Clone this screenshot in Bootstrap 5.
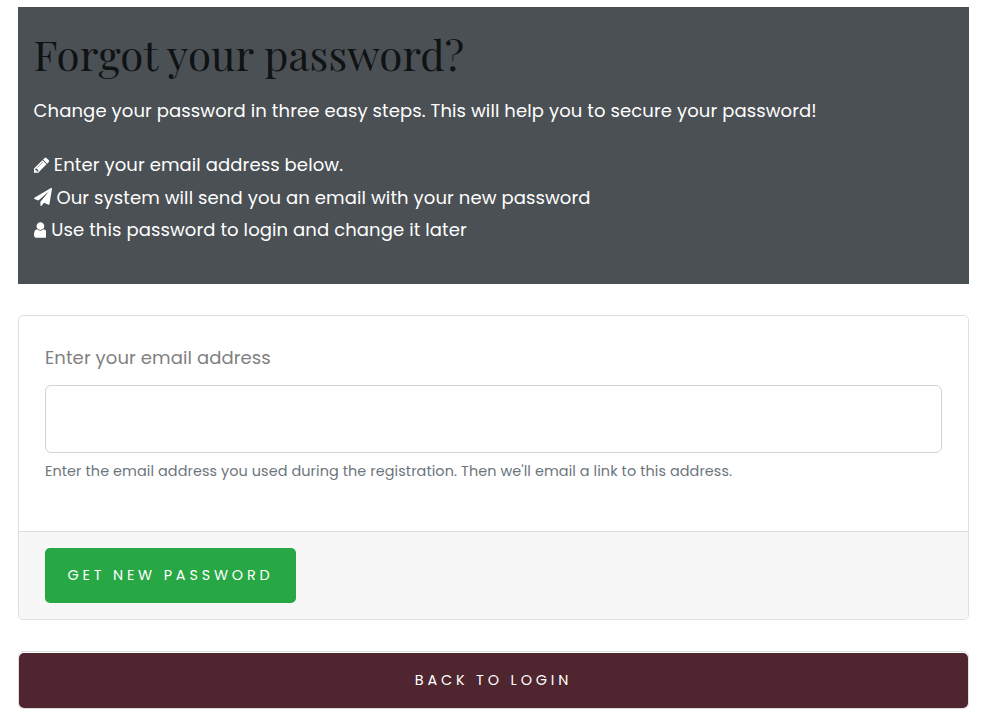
<!DOCTYPE html>
<html lang="en">
<head>
<meta charset="utf-8">
<meta name="viewport" content="width=device-width, initial-scale=1">
<title>Forgot your password?</title>
<link href="https://cdn.jsdelivr.net/npm/bootstrap@5.3.0/dist/css/bootstrap.min.css" rel="stylesheet">
<style>
body{font-family:Poppins,Inter,"Open Sans",sans-serif;font-size:18px;line-height:1.8;letter-spacing:.104px;color:gray;background:#fff;overflow:hidden}
.page{padding:7px 20px 0 18px}
.intro{background:#4b5054;height:277px;padding:22px 16px 0 15.6px}
.intro h1{font-family:"Playfair Display","Liberation Serif",serif;font-size:42px;line-height:50px;font-weight:400;color:#101314;margin-bottom:16px;letter-spacing:.09px;white-space:nowrap}
.intro p{margin-bottom:22px}
.steps svg{height:18px;vertical-align:-2.6px;fill:#fff;margin-right:4.8px}
.panel{margin-top:31px;border-color:#dfdfdf;border-radius:5px}
.panel .card-body{padding:25px 26px 47px}
.panel .form-label{margin-bottom:11px;line-height:33px}
.panel .form-control{height:68px;border-color:#ced4da;border-radius:6px}
.panel .form-text{font-size:14.4px;line-height:26px;margin-top:5px;letter-spacing:.09px;color:#6c757d}
.panel .card-footer{background:#f7f7f7;border-color:#dfdfdf;padding:16px 26px}
.action{height:55px;font-size:14.4px;line-height:54px;letter-spacing:3.84px;padding:0 22px;border:0;border-radius:5px;color:#fff}
.action-send,.action-send:hover{background:#28a745;color:#fff;width:251px;white-space:nowrap;padding-bottom:2px}
.back{margin-top:31px;border-color:#dfdfdf;border-radius:5px;padding-top:1px}
.action-back,.action-back:hover{background:#4f252f;color:#fff}
</style>
</head>
<body>
<main class="page">
  <section class="intro text-white">
    <h1>Forgot your password?</h1>
    <p>Change your password in three easy steps. This will help you to secure your password!</p>
    <ul class="steps list-unstyled mb-0">
      <li><svg viewBox="128 0 1536 1792"><path d="M491 1536l91-91-235-235-91 91v107h128v128h107zm523-928q0-22-22-22-10 0-17 7l-542 542q-7 7-7 17 0 22 22 22 10 0 17-7l542-542q7-7 7-17zm-54-192l416 416-832 832h-416v-416zm683 96q0 53-37 90l-166 166-416-416 166-165q36-38 90-38 53 0 91 38l235 234q37 39 37 91z"/></svg>Enter your email address below.</li>
      <li><svg viewBox="0 0 1792 1792"><path d="M1764 11q33 24 27 64l-256 1536q-5 29-32 45-14 8-31 8-11 0-24-5l-453-185-242 295q-18 23-49 23-13 0-22-4-19-7-30.5-23.5t-11.5-36.5v-349l864-1059-1069 925-395-162q-37-14-40-55-2-40 32-59l1664-960q15-9 32-9 20 0 36 11z"/></svg>Our system will send you an email with your new password</li>
      <li><svg viewBox="256 0 1280 1792"><path d="M1536 1399q0 109-62.5 187t-150.5 78h-854q-88 0-150.5-78t-62.5-187q0-85 8.5-160.5t31.5-152 58.5-131 94-89 134.5-34.5q131 128 313 128t313-128q76 0 134.5 34.5t94 89 58.5 131 31.5 152 8.5 160.5zm-256-887q0 159-112.5 271.5t-271.5 112.5-271.5-112.5-112.5-271.5 112.5-271.5 271.5-112.5 271.5 112.5 112.5 271.5z"/></svg>Use this password to login and change it later</li>
    </ul>
  </section>
  <form class="card panel">
    <div class="card-body">
      <label class="form-label d-block" for="email">Enter your email address</label>
      <input class="form-control" type="text" id="email">
      <div class="form-text">Enter the email address you used during the registration. Then we'll email a link to this address.</div>
    </div>
    <div class="card-footer"><button class="btn action action-send d-block" type="button">GET NEW PASSWORD</button></div>
  </form>
  <div class="card back"><a class="btn action action-back" href="#">BACK TO LOGIN</a></div>
</main>
<script src="https://cdn.jsdelivr.net/npm/bootstrap@5.3.0/dist/js/bootstrap.bundle.min.js"></script>
</body>
</html>
